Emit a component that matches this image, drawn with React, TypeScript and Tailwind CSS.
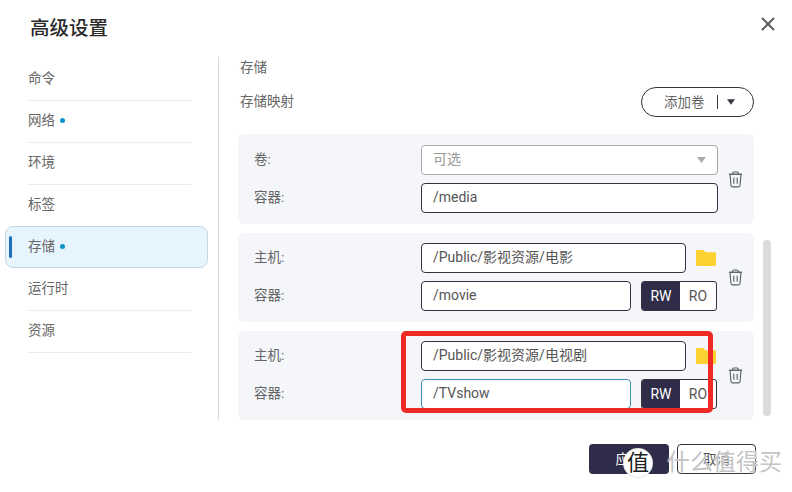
import { X } from 'lucide-react'

const fontStack = 'font-[Roboto,"Noto_Sans_CJK_SC",sans-serif]'

const navItems = [
  { label: '命令' },
  { label: '网络', dot: true },
  { label: '环境' },
  { label: '标签' },
  { label: '存储', dot: true, active: true },
  { label: '运行时' },
  { label: '资源' },
]

function TrashIcon() {
  return (
    <svg width="15" height="17" viewBox="0 0 16 18" fill="none" stroke="#5b5f66" strokeWidth="1.2">
      <path d="M5 3V2.200C5 1.500 5.500 1 6.200 1h3.600c.7 0 1.200.5 1.200 1.200V3" />
      <path d="M1 3.400h14" strokeWidth="1.5" />
      <path d="M2.200 3.600l.9 11.600c.1 1 .8 1.600 1.700 1.600h6.400c.9 0 1.600-.6 1.700-1.600l.9-11.600" />
      <path d="M6.200 7v6.400M9.800 7v6.400" />
    </svg>
  )
}

function FolderIcon() {
  return (
    <svg width="20" height="16" viewBox="0 0 20 16" fill="#fdd132">
      <path d="M0 1.200C0 .5.5 0 1.200 0h5.600c.4 0 .7.1 1 .4L9.600 2.200h9.200c.7 0 1.200.5 1.200 1.200v11.400c0 .7-.5 1.200-1.200 1.200H1.200C.5 16 0 15.500 0 14.800z" />
    </svg>
  )
}

function Field({ value, className = 'border-[#33343f]' }: { value: string; className?: string }) {
  return (
    <div
      className={`h-[30px] flex items-center px-[11px] pb-[2px] bg-white border rounded-[4px] text-[14px] text-[#555] ${className}`}
    >
      {value}
    </div>
  )
}

function RwToggle() {
  return (
    <div className="w-[76px] h-[30px] flex border border-[#33343f] rounded-[3px] overflow-hidden text-[14px] bg-white">
      <div className="w-[38px] flex items-center justify-center bg-[#2e2c48] text-white">RW</div>
      <div className="flex-1 flex items-center justify-center text-[#555]">RO</div>
    </div>
  )
}

function Label({ text }: { text: string }) {
  return <div className="w-[167px] pb-[2px] text-[13.500px] text-[#666]">{text}</div>
}

function HostCard({ host, container, focused }: { host: string; container: string; focused?: boolean }) {
  return (
    <div className="h-[89px] rounded-[6px] bg-[#f4f6fa] pl-4 pt-[10px]">
      <div className="flex items-center">
        <div className="flex flex-col gap-2">
          <div className="flex items-center">
            <Label text="主机:" />
            <Field value={host} className="w-[265px] border-[#33343f]" />
            <div className="ml-[10px] w-[21px] flex">
              <FolderIcon />
            </div>
          </div>
          <div className="flex items-center">
            <Label text="容器:" />
            <Field
              value={container}
              className={`w-[210px] ${focused ? 'border-[#3d8db5]' : 'border-[#33343f]'}`}
            />
            <div className="ml-[10px]">
              <RwToggle />
            </div>
          </div>
        </div>
        <div className="ml-[11px]">
          <TrashIcon />
        </div>
      </div>
    </div>
  )
}

export default function App() {
  return (
    <div className={`relative w-[792px] h-[492px] overflow-hidden bg-white ${fontStack}`}>
      <header className="h-[57px] flex items-start justify-between pl-[30px] pr-[13px]">
        <h1 className="mt-[15px] text-[19.500px] leading-[28px] font-medium text-[#2b2b2b]">高级设置</h1>
        <button className="mt-[13px] text-[#555]">
          <X size={22} strokeWidth={2} />
        </button>
      </header>

      <div className="flex">
        <nav className="w-[213px] ml-[5px] h-[306px] pt-[2px]">
          {navItems.map((item) =>
            item.active ? (
              <div
                key={item.label}
                className="relative -mt-px mb-px h-[42px] w-[203px] flex items-center pl-[22px] pb-[2px] gap-[5px] rounded-[8px] border border-[#c6d6e4] bg-[#e6f5fd] text-[13.500px] text-[#666]"
              >
                <span className="absolute left-[3px] top-[9px] h-[22px] w-[3px] rounded-full bg-[#1f6fbd]" />
                {item.label}
                <span className="w-[5px] h-[5px] rounded-full bg-[#0d93cf]" />
              </div>
            ) : (
              <div key={item.label} className="h-[42px] pl-[23px]">
                <div className="w-[163px] h-[42px] pb-[2px] flex items-center gap-[5px] border-b border-[#ececec] text-[13.500px] text-[#666]">
                  {item.label}
                  {item.dot && <span className="w-[5px] h-[5px] rounded-full bg-[#0d93cf]" />}
                </div>
              </div>
            ),
          )}
        </nav>

        <main className="w-[554px] h-[363px] border-l border-[#d8dbe0] pl-[19px] flex">
          <div className="w-[516px]">
            <div className="pl-[2px] mt-[2px] text-[13.500px] leading-[16px] text-[#666]">存储</div>
            <div className="flex items-center justify-between mt-[12px] h-[30px] pl-[2px]">
              <span className="pb-[2px] text-[13.500px] text-[#666]">存储映射</span>
              <button className="w-[113px] h-[30px] rounded-full border border-[#33343f] flex items-center pl-[22px] text-[13.500px] text-[#666]">
                添加卷
                <span className="ml-[12px] h-[14px] border-l border-[#33343f]" />
                <svg className="ml-[9px]" width="8" height="6" viewBox="0 0 9 6" fill="#3a3a44">
                  <path d="M0 0h9L4.500 6z" />
                </svg>
              </button>
            </div>

            <div className="mt-[17px] flex flex-col gap-[9px]">
              <div className="h-[90px] rounded-[6px] bg-[#f4f6fa] pl-4 pt-[11px]">
                <div className="flex items-center">
                  <div className="flex flex-col gap-2">
                    <div className="flex items-center">
                      <Label text="卷:" />
                      <div className="w-[297px] h-[30px] flex items-center justify-between px-[11px] bg-white border border-[#aaaaaa] rounded-[4px] text-[14px] text-[#999]">
                        <span className="pb-[2px]">可选</span>
                        <svg width="9" height="6" viewBox="0 0 9 6" fill="#aaa">
                          <path d="M0 0h9L4.500 6z" />
                        </svg>
                      </div>
                    </div>
                    <div className="flex items-center">
                      <Label text="容器:" />
                      <Field value="/media" className="w-[297px] border-[#33343f]" />
                    </div>
                  </div>
                  <div className="ml-[10px]">
                    <TrashIcon />
                  </div>
                </div>
              </div>
              <HostCard host="/Public/影视资源/电影" container="/movie" />
              <HostCard host="/Public/影视资源/电视剧" container="/TVshow" focused />
            </div>
          </div>
          <div className="ml-[9px] mt-[183px] w-[8px] h-[176px] rounded-full bg-[#dcdcdc]" />
        </main>
      </div>

      <footer className="mt-[24px] flex justify-end gap-[8px] pr-[36px]">
        <button className="w-[80px] h-[30px] rounded-[4px] bg-[#2e2c48] text-white text-[13.500px]">应用</button>
        <button className="w-[79px] h-[30px] rounded-[4px] border border-[#33343f] bg-white text-[#555] text-[13.500px]">
          取消
        </button>
      </footer>

      {/* annotation drawn over the screenshot */}
      <div className="absolute left-[401px] top-[331px] w-[312px] h-[82px] rounded-[5px] border-[5px] border-[#ee2a24]" />

      {/* watermark */}
      <div className="absolute left-[624px] top-[449px] w-[28px] h-[28px] rounded-full bg-white shadow-[0_0_0_1px_#e5e5e5] flex items-center justify-center text-[22px] leading-none text-[#222]">
        值
      </div>
      <div className="absolute left-[667px] top-[449px] text-[23px] leading-[28px] text-[#c4c4c4] [text-shadow:0_0_2px_white] whitespace-nowrap">
        什么值得买
      </div>
    </div>
  )
}
